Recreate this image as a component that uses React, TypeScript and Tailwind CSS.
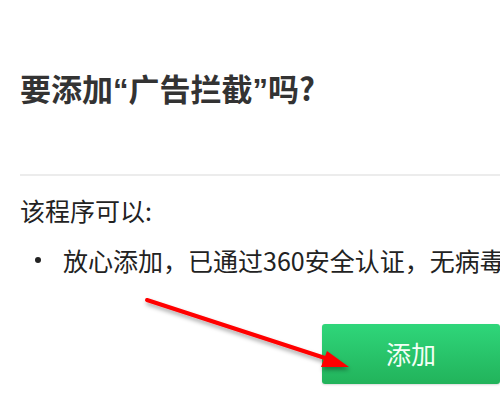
export default function App() {
  return (
    <div
      className="relative h-[400px] w-[500px] overflow-hidden bg-white"
      style={{ fontFamily: '"Microsoft YaHei", "Noto Sans CJK SC", "Noto Sans", sans-serif' }}
    >
      <div className="ml-5 h-[176px] border-b-2 border-[#ececec] pt-[67px]">
        <h1 className="text-[31px] font-bold leading-[42px] text-[#333]">
          要添加<span className="font-['Liberation_Sans']">“</span>广告拦截
          <span className="font-['Liberation_Sans']">”</span>吗?
        </h1>
      </div>

      <div className="pl-5">
        <p className="mt-[18px] text-[25px] leading-[32px] text-[#222]">该程序可以:</p>
        <ul className="mt-[18px]">
          <li className="flex items-center whitespace-nowrap text-[25px] leading-[32px] text-[#222]">
            <span className="ml-[15px] mr-[22px] h-[6px] w-[6px] shrink-0 rounded-full bg-[#222]" />
            放心添加，已通过360安全认证，无病毒
          </li>
        </ul>
      </div>

      <div className="ml-[322px] mt-[48px]">
        <button className="flex h-[60px] w-[178px] items-center justify-center rounded-[3px] bg-gradient-to-b from-[#2fd67a] to-[#22b35b] text-[25px] text-[#f4fff6] shadow-[0_1px_2px_rgba(0,0,0,0.15)]">
          添加
        </button>
      </div>

      {/* red annotation arrow */}
      <svg
        className="pointer-events-none absolute left-0 top-0"
        width="500"
        height="400"
        viewBox="0 0 500 400"
      >
        <defs>
          <filter id="sh" x="-10%" y="-30%" width="120%" height="160%">
            <feDropShadow dx="1" dy="3" stdDeviation="2" floodColor="#000" floodOpacity="0.35" />
          </filter>
        </defs>
        <g filter="url(#sh)">
          <line x1="147" y1="300" x2="328" y2="359" stroke="#ff0000" strokeWidth="4" strokeLinecap="round" />
          <polygon points="349,367 321,367 327,351" fill="#ff0000" />
        </g>
      </svg>
    </div>
  );
}
